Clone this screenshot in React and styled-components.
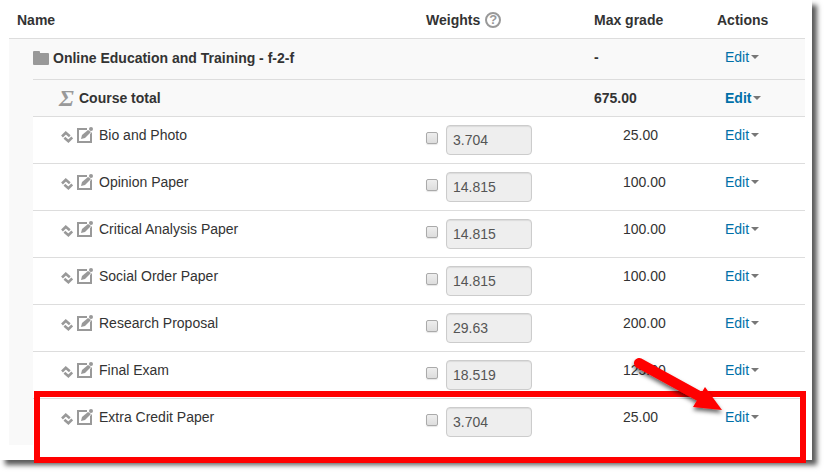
import React, { useState } from 'react';
import styled, { createGlobalStyle } from 'styled-components';

const GlobalStyle = createGlobalStyle`
  body {
    margin: 0;
    background-color: #fff;
    color: #333;
    font-family: 'Liberation Sans', Arial, sans-serif;
    font-size: 14px;
    line-height: 20px;
  }
`;

const Page = styled.div`
  padding: 0 15px 15px 0;
  overflow: hidden;
`;

const Card = styled.main`
  padding: 0 7px 15px 9px;
  background-color: #fff;
  box-shadow: 5px 5px 5px rgba(0, 0, 0, 0.65);
`;

const TableWrapper = styled.div`
  position: relative;
`;

const Table = styled.table`
  width: 100%;
  table-layout: fixed;
  border-collapse: separate;
  border-spacing: 0;
`;

const Col = styled.col`
  width: ${(props) => props.$width};
`;

const HeadCell = styled.th`
  padding: 10px 8px 8px;
  text-align: left;
  border-bottom: 1px solid #ddd;
`;

const HeadLabel = styled.div`
  display: flex;
  align-items: center;
  gap: 5px;
`;

const HelpButton = styled.button`
  width: 16px;
  height: 16px;
  padding: 0;
  border: 2px solid #999;
  border-radius: 50%;
  background: none;
  color: #999;
  font: bold 13px/12px 'Liberation Sans', Arial, sans-serif;
  cursor: pointer;
`;

const Indent = styled.td`
  padding: 0;
  background-color: #f9f9f9;
`;

const Row = styled.tr`
  background-color: ${(props) => (props.$shaded ? '#f9f9f9' : '#fff')};
  font-weight: ${(props) => (props.$bold ? 'bold' : 'normal')};

  &:not(:last-child) > td:not([rowspan]) {
    border-bottom: 1px solid #ddd;
  }
`;

const Cell = styled.td`
  height: ${(props) => props.$height || 20}px;
  padding: 8px;
  padding-left: ${(props) => (props.$indent === undefined ? 8 : props.$indent)}px;
  vertical-align: top;
`;

const NameLine = styled.div`
  display: flex;
  align-items: center;
  gap: ${(props) => props.$gap || 4}px;
  padding-top: ${(props) => props.$top || 0}px;
  white-space: nowrap;
`;

const Icons = styled.span`
  display: flex;
  gap: 4px;
`;

const Sigma = styled.span`
  width: 16px;
  color: #999;
  font: italic bold 24px/20px 'Liberation Serif', 'Times New Roman', serif;
`;

const Weight = styled.div`
  display: flex;
  align-items: flex-start;
  gap: 8px;
`;

const Checkbox = styled.input`
  appearance: none;
  box-sizing: border-box;
  width: 12px;
  height: 12px;
  margin: 7px 0 0;
  border: 1px solid #aaa;
  border-radius: 2px;
  background: linear-gradient(#eee, #ddd);
  box-shadow: 0 1px 1px rgba(0, 0, 0, 0.1);

  &:checked {
    background: #777;
  }
`;

const WeightInput = styled.input`
  box-sizing: border-box;
  width: 86px;
  height: 30px;
  padding: 4px 6px;
  border: 1px solid #ccc;
  border-radius: 4px;
  background-color: #eee;
  box-shadow: inset 0 1px 1px rgba(0, 0, 0, 0.08);
  color: #555;
  font: 14px/20px 'Liberation Sans', Arial, sans-serif;
`;

const EditLink = styled.a`
  display: inline-flex;
  align-items: center;
  gap: 2px;
  color: #0070a8;
  text-decoration: none;

  &::after {
    content: '';
    border: 4px solid transparent;
    border-top-color: #777;
    border-bottom: 0;
  }
`;

const Highlight = styled.div`
  position: absolute;
  left: 25px;
  right: -1px;
  bottom: -18px;
  height: 60px;
  border: 6px solid #f00;
  pointer-events: none;
`;

const Arrow = styled.svg`
  position: absolute;
  right: 78px;
  bottom: 26px;
  pointer-events: none;
`;

const FolderIcon = () => (
  <svg width='16' height='16' viewBox='0 0 16 16' fill='#999'>
    <path d='M0 2q0-1 1-1h5q1 0 1 1v1h8q1 0 1 1v10q0 1-1 1H1q-1 0-1-1z' />
  </svg>
);

const MoveIcon = () => (
  <svg width='12' height='16' viewBox='0 0 12 16' fill='none' stroke='#999' strokeWidth='2.6'>
    <path d='M1 9.500L4.800 5.800l4 3.400' />
    <path d='M3.400 10.800l4 3.400L11.200 10.500' />
  </svg>
);

const EditIcon = () => (
  <svg width='16' height='16' viewBox='0 0 16 16' fill='#999'>
    <path d='M0 1h10v2H2v11h11V7l2-2v11H0z' />
    <path d='M4 12l1-4 6-5 3 2-6 6z' />
    <circle cx='14' cy='2' r='2' />
  </svg>
);

const items = [
  { id: 1, name: 'Bio and Photo', weight: '3.704', max: '25.00' },
  { id: 2, name: 'Opinion Paper', weight: '14.815', max: '100.00' },
  { id: 3, name: 'Critical Analysis Paper', weight: '14.815', max: '100.00' },
  { id: 4, name: 'Social Order Paper', weight: '14.815', max: '100.00' },
  { id: 5, name: 'Research Proposal', weight: '29.63', max: '200.00' },
  { id: 6, name: 'Final Exam', weight: '18.519', max: '125.00' },
  { id: 7, name: 'Extra Credit Paper', weight: '3.704', max: '25.00' },
];

const GradeItem = ({ item }) => {
  const [override, setOverride] = useState(false);
  const [weight, setWeight] = useState(item.weight);

  return (
    <Row>
      <Cell $indent={28}>
        <NameLine $gap={6}>
          <Icons>
            <MoveIcon />
            <EditIcon />
          </Icons>
          <span>{item.name}</span>
        </NameLine>
      </Cell>
      <Cell>
        <Weight>
          <Checkbox
            type='checkbox'
            aria-label={`Override weight of ${item.name}`}
            checked={override}
            onChange={(e) => setOverride(e.target.checked)}
          />
          <WeightInput
            type='text'
            aria-label={`Weight of ${item.name}`}
            disabled={!override}
            value={weight}
            onChange={(e) => setWeight(e.target.value)}
          />
        </Weight>
      </Cell>
      <Cell $indent={37}>{item.max}</Cell>
      <Cell $indent={16}>
        <EditLink href='#edit'>Edit</EditLink>
      </Cell>
    </Row>
  );
};

const App = () => {
  return (
    <Page>
      <GlobalStyle />
      <Card>
        <TableWrapper>
          <Table>
            <colgroup>
              <Col $width='24px' />
              <Col $width='auto' />
              <Col $width='168px' />
              <Col $width='123px' />
              <Col $width='96px' />
            </colgroup>
            <thead>
              <tr>
                <HeadCell colSpan={2}>Name</HeadCell>
                <HeadCell>
                  <HeadLabel>
                    Weights
                    <HelpButton type='button' aria-label='Help with Weights'>
                      ?
                    </HelpButton>
                  </HeadLabel>
                </HeadCell>
                <HeadCell>Max grade</HeadCell>
                <HeadCell>Actions</HeadCell>
              </tr>
            </thead>
            <tbody>
              <Row $shaded>
                <Indent rowSpan={items.length + 2} />
                <Cell $indent={0} $height={24}>
                  <NameLine $top={1}>
                    <FolderIcon />
                    <b>Online Education and Training - f-2-f</b>
                  </NameLine>
                </Cell>
                <Cell />
                <Cell>
                  <b>-</b>
                </Cell>
                <Cell $indent={16}>
                  <EditLink href='#edit'>Edit</EditLink>
                </Cell>
              </Row>
              <Row $shaded $bold>
                <Cell $indent={26}>
                  <NameLine>
                    <Sigma aria-hidden='true'>Σ</Sigma>
                    <span>Course total</span>
                  </NameLine>
                </Cell>
                <Cell />
                <Cell>675.00</Cell>
                <Cell $indent={16}>
                  <EditLink href='#edit'>Edit</EditLink>
                </Cell>
              </Row>
              {items.map((item) => (
                <GradeItem item={item} key={item.id} />
              ))}
            </tbody>
          </Table>
          <Highlight />
          <Arrow width='96' height='64' viewBox='0 0 96 64'>
            <defs>
              <filter id='arrowShadow' x='-10%' y='-10%' width='130%' height='130%'>
                <feDropShadow dx='0' dy='3' stdDeviation='2' floodColor='#000' floodOpacity='0.6' />
              </filter>
            </defs>
            <g filter='url(#arrowShadow)' fill='#f00'>
              <path d='M8 8L68 41' stroke='#f00' strokeWidth='10' strokeLinecap='round' />
              <path d='M91 55L74 32 62 52z' />
            </g>
          </Arrow>
        </TableWrapper>
      </Card>
    </Page>
  );
};

export default App;
